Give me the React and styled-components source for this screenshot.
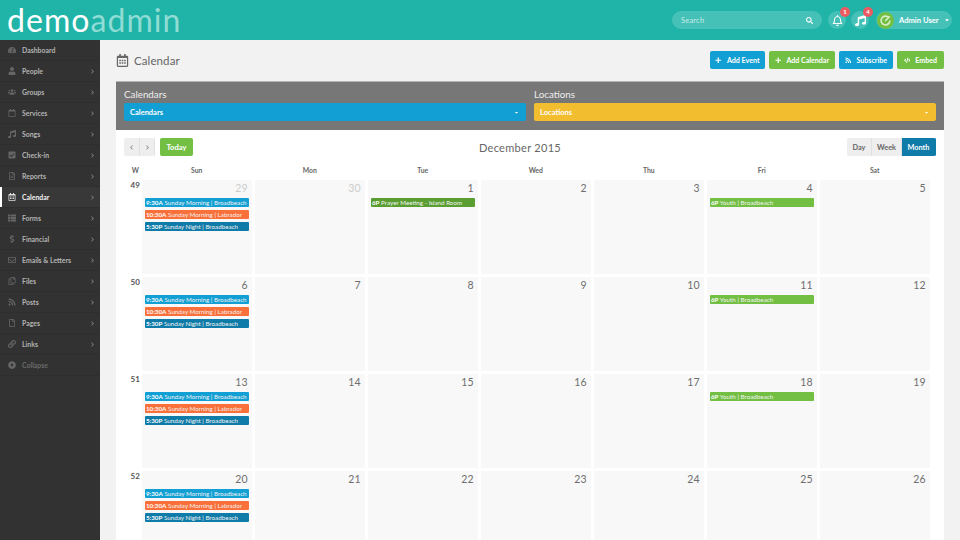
import React from "react";
import styled, { createGlobalStyle } from "styled-components";
import {
  FaTachometerAlt, FaUser, FaUsers, FaRegCalendar, FaMusic, FaCheckSquare, FaRegFileAlt,
  FaRegCalendarAlt, FaThList, FaDollarSign, FaRegEnvelope, FaRegCopy, FaRss, FaRegFile, FaLink,
  FaChevronRight, FaChevronLeft, FaPlus, FaCode, FaSearch, FaRegBell, FaCaretDown, FaDotCircle,
} from "react-icons/fa";

const FONT = `"Lato", "Liberation Sans", sans-serif`;

const Global = createGlobalStyle`
  html, body { margin: 0; padding: 0; }
  body { font-family: ${FONT}; background: #f2f2f2; }
  * { box-sizing: border-box; }
`;

const Page = styled.div`
  width: 960px;
  height: 540px;
  overflow: hidden;
  display: flex;
  flex-direction: column;
`;

const Header = styled.header`
  height: 40px;
  flex: none;
  background: #20b3a8;
  display: flex;
  align-items: center;
  justify-content: space-between;
  padding: 0 8px 0 7px;
`;

const Logo = styled.div`
  align-self: flex-start;
  font-weight: 400;
  font-size: 32px;
  line-height: 39px;
  letter-spacing: 1.05px;
  color: #fff;
  span { color: #8fdcd4; }
`;

const HeaderRight = styled.div`
  display: flex;
  align-items: center;
`;

const Search = styled.div`
  width: 150px;
  height: 18px;
  border-radius: 9px;
  background: #45c1b7;
  color: #c5ece8;
  font-size: 7.5px;
  letter-spacing: 0.2px;
  display: flex;
  align-items: center;
  justify-content: space-between;
  padding: 0 9px;
  margin-right: 6px;
  svg { color: #fff; font-size: 7px; }
`;

const RoundBtn = styled.div`
  position: relative;
  width: 18px;
  height: 18px;
  border-radius: 50%;
  background: #45c1b7;
  color: #fff;
  display: flex;
  align-items: center;
  justify-content: center;
  font-size: 11px;
  margin-right: ${(p) => p.$gap}px;
`;

const Badge = styled.span`
  position: absolute;
  top: -4px;
  right: -4px;
  width: 10px;
  height: 10px;
  border-radius: 50%;
  background: #ec5a5f;
  color: #fff;
  font-size: 6px;
  font-weight: 700;
  line-height: 10px;
  text-align: center;
`;

const UserPill = styled.div`
  width: 76px;
  height: 18px;
  border-radius: 9px;
  background: #45c1b7;
  display: flex;
  align-items: center;
  padding-left: 1px;
  color: #fff;
  font-size: 7.6px;
  font-weight: 700;
  white-space: nowrap;
  svg.caret { font-size: 6px; margin-left: 5px; }
`;

const Avatar = styled.div`
  width: 17px;
  height: 17px;
  border-radius: 50%;
  background: #72bf44;
  margin-right: 5px;
  display: flex;
  align-items: center;
  justify-content: center;
`;

const Body = styled.div`
  flex: 1;
  display: flex;
  min-height: 0;
`;

const Sidebar = styled.nav`
  width: 100px;
  flex: none;
  background: #323232;
`;

const NavRow = styled.div`
  position: relative;
  height: 21px;
  display: flex;
  align-items: center;
  padding: 0 5px 0 8px;
  border-bottom: 1px solid #2e2e2e;
  font-size: 6.9px;
  font-weight: 700;
  color: ${(p) => (p.$active ? "#f2f2f2" : p.$muted ? "#6a6a6a" : "#b4b4b4")};
  background: ${(p) => (p.$active ? "#383838" : "transparent")};
  &::before {
    content: "";
    display: ${(p) => (p.$active ? "block" : "none")};
    position: absolute;
    left: 0;
    top: 0;
    bottom: 0;
    width: 2px;
    background: #fff;
  }
`;

const NavIcon = styled.span`
  width: 14px;
  display: flex;
  color: ${(p) => (p.$active ? "#ddd" : "#666")};
  font-size: 8px;
`;

const NavLabel = styled.span`
  flex: 1;
`;

const NavArrow = styled.span`
  color: #808080;
  font-size: 5px;
  display: flex;
`;

const Main = styled.main`
  flex: 1;
  min-width: 0;
  padding: 0 16px;
`;

const TitleBar = styled.div`
  height: 41px;
  padding-bottom: 1px;
  display: flex;
  align-items: center;
  justify-content: space-between;
`;

const Title = styled.h1`
  margin: 0;
  font-size: 11.5px;
  font-weight: 400;
  color: #666;
  letter-spacing: 0.1px;
  display: flex;
  align-items: center;
  gap: 5px;
  svg { font-size: 13px; color: #666; }
`;

const Actions = styled.div`
  display: flex;
  gap: 4px;
`;

const ActionBtn = styled.button`
  height: 18px;
  width: ${(p) => p.$w}px;
  border: 0;
  border-radius: 2px;
  background: ${(p) => p.$bg};
  color: #fff;
  font: 700 7.1px ${FONT};
  display: flex;
  align-items: center;
  justify-content: center;
  gap: 5px;
  padding: 0;
  svg { font-size: 6.5px; }
`;

const Panel = styled.section`
  background: #fff;
  border-top: 1px solid #b5b5b5;
`;

const Filters = styled.div`
  background: #777;
  height: 48px;
  display: grid;
  grid-template-columns: 402px 402px;
  gap: 8px;
  padding: 5px 8px 0;
`;

const Filter = styled.div`
  label {
    display: block;
    color: #eee;
    font-size: 9.8px;
    line-height: 14px;
    margin-bottom: 2px;
  }
`;

const Select = styled.div`
  height: 18px;
  border-radius: 2px;
  background: ${(p) => p.$bg};
  color: #fff;
  font-size: 7.5px;
  font-weight: 700;
  display: flex;
  align-items: center;
  justify-content: space-between;
  padding: 0 7px 0 6px;
  svg { font-size: 5px; }
`;

const Cal = styled.div`
  padding: 8px 8px 0;
`;

const CalBar = styled.div`
  height: 18px;
  display: grid;
  grid-template-columns: 1fr auto 1fr;
  align-items: center;
`;

const BarLeft = styled.div`
  display: flex;
  gap: 5px;
`;

const BtnGroup = styled.div`
  display: flex;
  justify-self: ${(p) => (p.$end ? "end" : "start")};
  border-radius: 2px;
  overflow: hidden;
`;

const GroupBtn = styled.div`
  height: 18px;
  width: ${(p) => p.$w}px;
  background: ${(p) => (p.$on ? "#0f7ba8" : "#eee")};
  color: ${(p) => (p.$on ? "#fff" : "#666")};
  border-right: 1px solid ${(p) => (p.$on ? "#0f7ba8" : "#e0e0e0")};
  font-size: 7.3px;
  font-weight: 700;
  display: flex;
  align-items: center;
  justify-content: center;
  svg { font-size: 5px; color: #888; }
`;

const TodayBtn = styled.div`
  height: 18px;
  width: 33px;
  border-radius: 2px;
  background: #72bf44;
  color: #fff;
  font-size: 7.6px;
  font-weight: 700;
  display: flex;
  align-items: center;
  justify-content: center;
`;

const MonthTitle = styled.h2`
  margin: 0 20px 0 0;
  font-size: 11px;
  font-weight: 400;
  color: #666;
  letter-spacing: 0.3px;
`;

const Grid = styled.div`
  display: grid;
  grid-template-columns: 14.5px repeat(7, 109.5px);
  column-gap: 3.5px;
`;

const DayHead = styled.div`
  height: 24px;
  padding-top: 4px;
  margin: ${(p) => (p.$w ? "0 -4px 0 4px" : "0")};
  display: flex;
  align-items: center;
  justify-content: center;
  font-size: 6.8px;
  font-weight: 700;
  color: #666;
`;

const WeekNo = styled.div`
  font-size: 8px;
  font-weight: 700;
  color: #555;
  text-align: center;
  margin: 0 -4px 0 4px;
`;

const Cell = styled.div`
  height: 94px;
  margin-bottom: 3px;
  background: #f8f8f8;
  padding: 1px 3px 0;
`;

const DayNum = styled.div`
  text-align: right;
  font-size: 10.5px;
  line-height: 14px;
  height: 17px;
  padding-right: 1px;
  color: ${(p) => (p.$dim ? "#ccc" : "#6e6e6e")};
`;

const Event = styled.div`
  height: 9px;
  margin-bottom: 3px;
  background: ${(p) => p.$bg};
  color: #f2f2f2;
  font-size: 6.25px;
  line-height: 9px;
  padding-left: 1px;
  border-radius: 1px;
  white-space: nowrap;
  overflow: hidden;
  b { font-weight: 700; color: #fff; }
`;

const nav = [
  ["Dashboard", <FaTachometerAlt />, false],
  ["People", <FaUser />, true],
  ["Groups", <FaUsers />, true],
  ["Services", <FaRegCalendar />, true],
  ["Songs", <FaMusic />, true],
  ["Check-in", <FaCheckSquare />, true],
  ["Reports", <FaRegFileAlt />, true],
  ["Calendar", <FaRegCalendarAlt />, true],
  ["Forms", <FaThList />, true],
  ["Financial", <FaDollarSign />, true],
  ["Emails & Letters", <FaRegEnvelope />, true],
  ["Files", <FaRegCopy />, true],
  ["Posts", <FaRss />, true],
  ["Pages", <FaRegFile />, true],
  ["Links", <FaLink />, true],
];

const BLUE = "#119fd4";
const ORANGE = "#f9703a";
const TEAL = "#0f7ba8";
const GREEN = "#72bf44";
const DARK_GREEN = "#5a9e32";

const sunday = [
  ["9:30A", "Sunday Morning | Broadbeach", BLUE],
  ["10:30A", "Sunday Morning | Labrador", ORANGE],
  ["5:30P", "Sunday Night | Broadbeach", TEAL],
];
const youth = [["6P", "Youth | Broadbeach", GREEN]];
const prayer = [["6P", "Prayer Meeting - Island Room", DARK_GREEN]];

const weeks = [
  { no: 49, days: [29, 30, 1, 2, 3, 4, 5], dim: [0, 1], events: { 0: sunday, 2: prayer, 5: youth } },
  { no: 50, days: [6, 7, 8, 9, 10, 11, 12], dim: [], events: { 0: sunday, 5: youth } },
  { no: 51, days: [13, 14, 15, 16, 17, 18, 19], dim: [], events: { 0: sunday, 5: youth } },
  { no: 52, days: [20, 21, 22, 23, 24, 25, 26], dim: [], events: { 0: sunday } },
];

export default function App() {
  return (
    <Page>
      <Global />
      <Header>
        <Logo>demo<span>admin</span></Logo>
        <HeaderRight>
          <Search>Search <FaSearch /></Search>
          <RoundBtn $gap={5}><FaRegBell /><Badge>1</Badge></RoundBtn>
          <RoundBtn $gap={7}><FaMusic /><Badge>4</Badge></RoundBtn>
          <UserPill>
            <Avatar>
              <svg width="11" height="11" viewBox="0 0 11 11" fill="none" stroke="#d8efc8" strokeWidth="1.6">
                <path d="M8.6 2.4A4.4 4.4 0 1 0 9.9 5.5" />
                <path d="M5.2 6 9.8 1.2" />
              </svg>
            </Avatar>
            Admin User
            <FaCaretDown className="caret" />
          </UserPill>
        </HeaderRight>
      </Header>
      <Body>
        <Sidebar>
          {nav.map(([label, icon, arrow]) => (
            <NavRow key={label} $active={label === "Calendar"}>
              <NavIcon $active={label === "Calendar"}>{icon}</NavIcon>
              <NavLabel>{label}</NavLabel>
              {arrow && <NavArrow><FaChevronRight /></NavArrow>}
            </NavRow>
          ))}
          <NavRow $muted>
            <NavIcon><FaDotCircle /></NavIcon>
            <NavLabel>Collapse</NavLabel>
          </NavRow>
        </Sidebar>
        <Main>
          <TitleBar>
            <Title><FaRegCalendarAlt /> Calendar</Title>
            <Actions>
              <ActionBtn $w={55} $bg={BLUE}><FaPlus /> Add Event</ActionBtn>
              <ActionBtn $w={66} $bg={GREEN}><FaPlus /> Add Calendar</ActionBtn>
              <ActionBtn $w={54} $bg={BLUE}><FaRss /> Subscribe</ActionBtn>
              <ActionBtn $w={47} $bg={GREEN}><FaCode /> Embed</ActionBtn>
            </Actions>
          </TitleBar>
          <Panel>
            <Filters>
              <Filter>
                <label>Calendars</label>
                <Select $bg={BLUE}>Calendars <FaCaretDown /></Select>
              </Filter>
              <Filter>
                <label>Locations</label>
                <Select $bg="#f2bd2f">Locations <FaCaretDown /></Select>
              </Filter>
            </Filters>
            <Cal>
              <CalBar>
                <BarLeft>
                  <BtnGroup>
                    <GroupBtn $w={16}><FaChevronLeft /></GroupBtn>
                    <GroupBtn $w={15}><FaChevronRight /></GroupBtn>
                  </BtnGroup>
                  <TodayBtn>Today</TodayBtn>
                </BarLeft>
                <MonthTitle>December 2015</MonthTitle>
                <BtnGroup $end>
                  <GroupBtn $w={25}>Day</GroupBtn>
                  <GroupBtn $w={30}>Week</GroupBtn>
                  <GroupBtn $w={34} $on>Month</GroupBtn>
                </BtnGroup>
              </CalBar>
              <Grid>
                <DayHead $w>W</DayHead>
                {["Sun", "Mon", "Tue", "Wed", "Thu", "Fri", "Sat"].map((d) => (
                  <DayHead key={d}>{d}</DayHead>
                ))}
                {weeks.map((w) => (
                  <React.Fragment key={w.no}>
                    <WeekNo>{w.no}</WeekNo>
                    {w.days.map((d, i) => (
                      <Cell key={d}>
                        <DayNum $dim={w.dim.includes(i)}>{d}</DayNum>
                        {(w.events[i] || []).map(([t, name, bg]) => (
                          <Event key={t + name} $bg={bg}><b>{t}</b> {name}</Event>
                        ))}
                      </Cell>
                    ))}
                  </React.Fragment>
                ))}
              </Grid>
            </Cal>
          </Panel>
        </Main>
      </Body>
    </Page>
  );
}
